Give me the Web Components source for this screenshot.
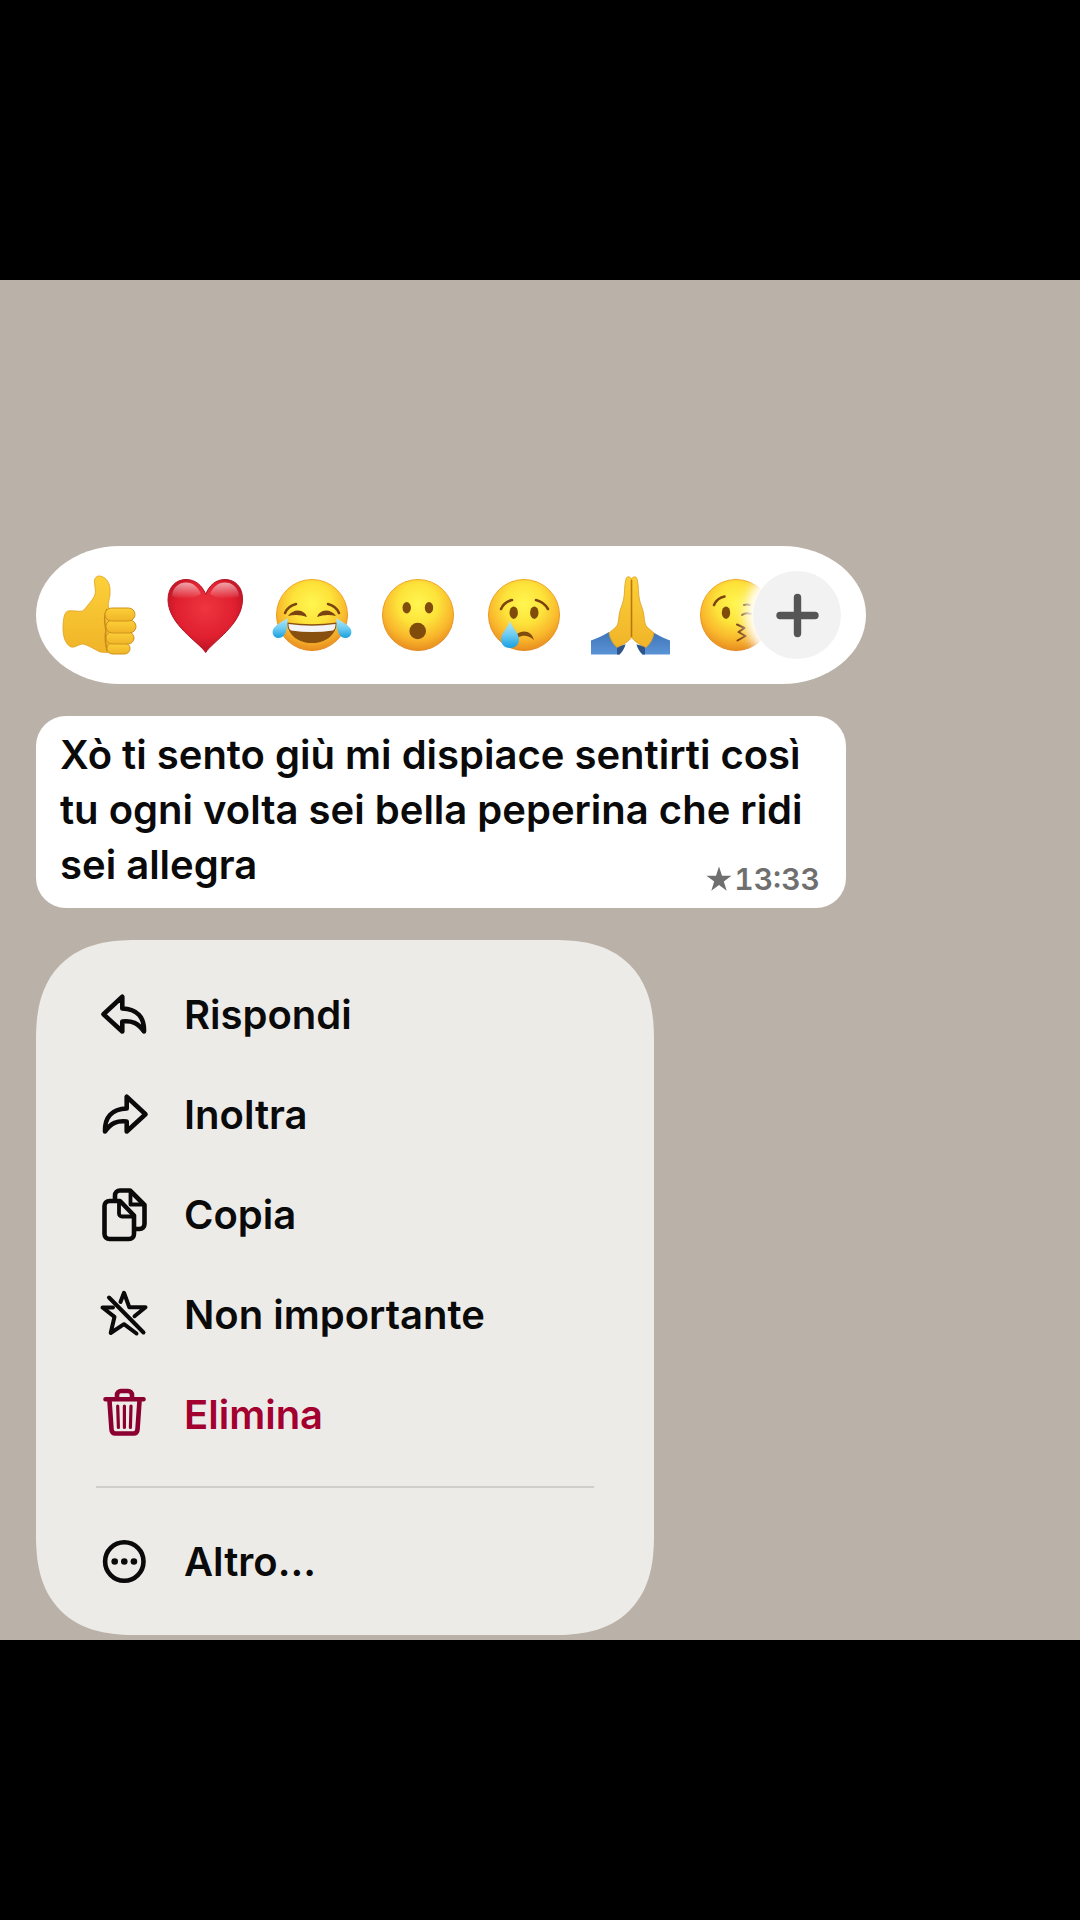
<!DOCTYPE html>
<html lang="it">
<head>
<meta charset="utf-8">
<meta name="viewport" content="width=device-width, initial-scale=1">
<title>Messaggio</title>
<style>
  body {
    margin: 0;
    background: #000;
    font-family: Inter, "Noto Sans", sans-serif;
    color: #0a0a0a;
  }
</style>
</head>
<body>

<template id="template-chat-overlay">
  <style>
    :host {
      display: flex;
      flex-direction: column;
      justify-content: center;
      min-height: 100vh;
    }
    main {
      display: flex;
      flex-direction: column;
      align-items: flex-start;
      gap: 32px;
      padding: 266px 36px 5px;
      background: #bab1a8;
    }
  </style>
  <main><slot></slot></main>
</template>

<template id="template-reaction-bar">
  <style>
    :host {
      display: flex;
      align-items: center;
      box-sizing: border-box;
      height: 138px;
      padding: 0 25px 0 24px;
      background: #fff;
      border-radius: 84px / 69px;
    }
    .strip {
      display: flex;
      gap: 26px;
    }
    .add {
      position: relative;
      width: 88px;
      height: 88px;
      margin: 0 0 0 -23px;
      padding: 0;
      border: 0;
      border-radius: 50%;
      background: #f2f2f2;
      box-shadow: 0 0 12px 8px #fff;
      color: #555;
    }
    .add svg {
      display: block;
      width: 88px;
      height: 88px;
    }
  </style>
  <div class="strip"><slot></slot></div>
  <button class="add" type="button" aria-label="Altre reazioni">
    <svg viewBox="0 0 88 88" fill="none" stroke="currentColor" stroke-width="7.400" stroke-linecap="round">
      <path d="M44.500 26.500V62.500M27 44.500H62"/>
    </svg>
  </button>
</template>

<template id="template-reaction-button">
  <style>
    :host {
      display: block;
    }
    button {
      display: block;
      padding: 0;
      border: 0;
      background: none;
    }
    svg {
      display: block;
      width: 80px;
      height: 80px;
      overflow: visible;
    }
  </style>
  <button type="button"></button>
</template>

<template id="template-message-bubble">
  <style>
    :host {
      display: flex;
      flex-direction: column;
      box-sizing: border-box;
      width: 75vw;
      padding: 11px 26px 11px 24px;
      background: #fff;
      border-radius: 30px;
    }
    p {
      margin: 0;
      font-size: 40px;
      font-weight: 600;
      line-height: 55px;
    }
    /* the time shares the last text line */
    .meta {
      display: flex;
      align-items: center;
      align-self: flex-end;
      gap: 2px;
      margin-top: -31px;
      font-size: 30px;
      font-weight: 600;
      font-variant-numeric: tabular-nums;
      line-height: 36px;
      color: #6f6f6f;
    }
    svg {
      width: 26px;
      height: 26px;
    }
  </style>
  <p><slot></slot></p>
  <div class="meta">
    <svg viewBox="0 0 26 26" fill="currentColor" aria-hidden="true">
      <path d="M13 .5L16 9.700H25.500L17.800 15.400L20.700 24.700L13 19L5.300 24.700L8.200 15.400L.5 9.700H10Z"/>
    </svg>
    <time></time>
  </div>
</template>

<template id="template-context-menu">
  <style>
    :host {
      display: flex;
      flex-direction: column;
      box-sizing: border-box;
      width: calc(57vw + 2px);
      padding: 25px 60px 23px;
      background: #ecebe7;
      border-radius: 84px;
    }
    @supports (corner-shape: superellipse(1.3)) {
      :host {
        border-radius: 100px;
        corner-shape: superellipse(1.3);
      }
    }
    ::slotted(hr) {
      box-sizing: border-box;
      width: 100%;
      height: 2px;
      margin: 21px 0 24px;
      border: 0;
      background: #cfcecb;
    }
  </style>
  <slot></slot>
</template>

<template id="template-menu-item">
  <style>
    :host {
      display: block;
    }
    button {
      display: flex;
      align-items: center;
      gap: 32px;
      width: 100%;
      height: 100px;
      padding: 0;
      border: 0;
      background: none;
      font: inherit;
      font-size: 40px;
      font-weight: 600;
      line-height: 54px;
      color: inherit;
      text-align: left;
    }
    :host([danger]) button {
      color: #a3002f;
    }
    :host([danger]) svg {
      color: #8b0030;
    }
    svg {
      flex: none;
      width: 56px;
      height: 56px;
    }
  </style>
  <button type="button">
    <svg viewBox="-4 -4 56 56" fill="none" stroke="currentColor" stroke-width="4.600" stroke-linecap="round" stroke-linejoin="round" aria-hidden="true"></svg>
    <span><slot></slot></span>
  </button>
</template>

<chat-overlay>
  <reaction-bar>
    <reaction-button name="thumb" label="Pollice in su"></reaction-button>
    <reaction-button name="heart" label="Cuore"></reaction-button>
    <reaction-button name="joy" label="Lacrime di gioia"></reaction-button>
    <reaction-button name="wow" label="Sorpresa"></reaction-button>
    <reaction-button name="cry" label="Pianto"></reaction-button>
    <reaction-button name="pray" label="Mani giunte"></reaction-button>
    <reaction-button name="kiss" label="Bacio"></reaction-button>
  </reaction-bar>
  <message-bubble time="13:33">Xò ti sento giù mi dispiace sentirti così tu ogni volta sei bella peperina che ridi sei allegra</message-bubble>
  <context-menu>
    <menu-item icon="reply">Rispondi</menu-item>
    <menu-item icon="forward">Inoltra</menu-item>
    <menu-item icon="copy">Copia</menu-item>
    <menu-item icon="unstar">Non importante</menu-item>
    <menu-item icon="trash" danger>Elimina</menu-item>
    <hr>
    <menu-item icon="more">Altro...</menu-item>
  </context-menu>
</chat-overlay>

<script>
  (function() {

    // gradients live in each shadow root, so that url(#id) resolves there
    const defs = `
      <defs>
        <radialGradient id="face" cx=".5" cy=".34" r=".7">
          <stop offset="0" stop-color="#fff650"/>
          <stop offset=".4" stop-color="#fde33a"/>
          <stop offset=".72" stop-color="#f9b62c"/>
          <stop offset="1" stop-color="#e3831c"/>
        </radialGradient>
        <linearGradient id="rim" x2="0" y2="1">
          <stop offset="0" stop-color="#f0a81c"/>
          <stop offset="1" stop-color="#e38a22"/>
        </linearGradient>
        <linearGradient id="tear" x2="0" y2="1">
          <stop offset="0" stop-color="#b5e9f8"/>
          <stop offset=".5" stop-color="#6fcdf0"/>
          <stop offset="1" stop-color="#189fe0"/>
        </linearGradient>
        <linearGradient id="skin" x2="0" y2="1">
          <stop offset="0" stop-color="#fcd038"/>
          <stop offset="1" stop-color="#f0b429"/>
        </linearGradient>
        <radialGradient id="red" cx=".5" cy=".4" r=".65">
          <stop offset="0" stop-color="#ee3540"/>
          <stop offset=".6" stop-color="#e0202f"/>
          <stop offset="1" stop-color="#b00f20"/>
        </radialGradient>
        <linearGradient id="shine" x2="0" y2="1">
          <stop offset="0" stop-color="#fff" stop-opacity=".6"/>
          <stop offset="1" stop-color="#fff" stop-opacity="0"/>
        </linearGradient>
        <linearGradient id="sleeve" x2="0" y2="1">
          <stop offset="0" stop-color="#3f74b8"/>
          <stop offset="1" stop-color="#5a94d6"/>
        </linearGradient>
      </defs>`;

    const face = '<circle cx="40" cy="40" r="35.500" fill="url(#face)" stroke="url(#rim)"/>';

    const reactions = {
      thumb: `
        <path fill="url(#skin)" stroke="#dfa01f" stroke-width=".8" d="M8 36C13 35 18 37 23 36C27 31 31 27 34 22C37 16 34 11 34.500 5C35.500 1 39 0 43 2C49 5 50.500 12 50 18C50 24 47 29 49 34L52 75C49 79 44 77 40 77C34 74 28 70 23 69C19 69 15 73 11 72C5 69 3 61 3 53C3 46 4 37 8 36Z"/>
        <path d="M47 34C43 42 45 49 46 56C44 63 46 69 47 76" fill="none" stroke="#c98a1a" stroke-width="1.500"/>
        <g fill="url(#skin)" stroke="#cf921c" stroke-width="1">
          <rect x="47" y="68" width="23" height="11" rx="5.500"/>
          <rect x="46" y="57" width="28" height="12" rx="6"/>
          <rect x="46" y="45" width="30" height="13" rx="6.500"/>
          <rect x="45" y="33" width="30" height="13" rx="6.500"/>
        </g>`,
      heart: `
        <path fill="url(#red)" stroke="#b31225" d="M39.700 77.500C33 67 2.500 50 2 25C2 12 10 4.500 20 4.500C29 4.500 36 10 39.700 19.300C43.500 10 50 4.500 59 4.500C69 4.500 77 12 76.500 25C76 50 46 67 39.700 77.500Z"/>
        <path fill="url(#shine)" d="M6 21C7 12 13 7.500 20 7.500C27 7.500 32 12 35 19C26 25 15 25 6 21ZM73 21C72 12 66 7.500 59 7.500C52 7.500 47 12 44 19C53 25 64 25 73 21Z"/>`,
      joy: face + `
        <g fill="none" stroke="#7b4311" stroke-width="2.500" stroke-linecap="round">
          <path d="M13 38Q16 31 24 29M67 38Q64 31 56 29"/>
        </g>
        <path fill="#7b4311" d="M16 41Q20 35.500 26 35.500Q33 36 35 42Q26 38.500 16 41ZM64 41Q60 35.500 54 35.500Q47 36 45 42Q54 38.500 64 41Z"/>
        <path fill="#87500f" d="M15 47.500Q40 51 65 47.500C64 60 54 68 40 68C26 68 16 60 15 47.500Z"/>
        <path fill="#f4f4f6" d="M16.500 49Q40 52.500 63.500 49Q63.500 54 61 55.500Q40 58.500 19 55.500Q16.500 54 16.500 49Z"/>
        <path fill="url(#tear)" d="M15.500 43C16 52 14 63 6.500 63C1 63-1 57 2 53C5 49 10 47 15.500 43ZM64.500 43C64 52 66 63 73.500 63C79 63 81 57 78 53C75 49 70 47 64.500 43Z"/>`,
      wow: face + `
        <g fill="#7f4c0c">
          <ellipse cx="28.700" cy="32.700" rx="4.200" ry="5.700"/>
          <ellipse cx="51" cy="32.700" rx="4.200" ry="5.700"/>
          <ellipse cx="39.700" cy="56" rx="8.300" ry="8.300"/>
        </g>`,
      cry: face + `
        <g fill="#7f4c0c">
          <ellipse cx="29.700" cy="37.700" rx="4.200" ry="6.200"/>
          <ellipse cx="50.300" cy="37.700" rx="4.200" ry="6.200"/>
          <path d="M32 59.500C40 53.500 48 57 50 65C44 60 39 60 34 62.500Z"/>
        </g>
        <path d="M17 34Q20 27 28 25M64 34Q60 27 52 25" fill="none" stroke="#7b4311" stroke-width="2.600" stroke-linecap="round"/>
        <path fill="url(#tear)" d="M26 45.500C28 53 35 58 35 64.500C35 69.500 31 73 26 73C21 73 17 69.500 17 64.500C17 58 24 53 26 45.500Z"/>`,
      pray: `
        <path fill="url(#sleeve)" d="M1 65.500C8 63 14 60 19 57L28 71L35.500 69.500C34 74 32 77 29.500 79.500H1ZM80 65.500C73 63 68 60 62.500 57L54 71L46.500 69.500C48 74 50 77 52.500 79.500H80Z"/>
        <path fill="#2f5488" d="M27 72L35.500 69.500C34 74 32 77 29.500 79.500H27ZM55 72L46.500 69.500C48 74 50 77 52.500 79.500H55Z"/>
        <g fill="url(#skin)" stroke="#dda01f" stroke-width=".8">
          <path d="M41.500 4C40 1 36.500 1 36 4C34 11 35 18 33.500 25C32 31 29.500 35 29 41C28.500 46 28 50 26 52L19 58C20 64 23 69 27 72.500C32 70 39 67 41.500 62Z"/>
          <path d="M41.500 4C43 1 46.500 1 47 4C49 11 48 18 49.500 25C51 31 53.500 35 54 41C54.500 46 55 50 57 52L64 58C63 64 60 69 56 72.500C51 70 44 67 41.500 62Z"/>
        </g>
        <path d="M41.500 5V62" stroke="#b9760f" stroke-width="1.600"/>`,
      kiss: face + `
        <ellipse cx="30" cy="37.700" rx="4.200" ry="6.200" fill="#7f4c0c"/>
        <g fill="none" stroke="#7b4311" stroke-width="2.600" stroke-linecap="round">
          <path d="M18 30Q21 23 28.500 21.500"/>
          <path stroke-width="2" d="M41 49.500L48.500 53L42.500 57L49.500 61L41.500 65.500" stroke-linejoin="round"/>
          <path stroke-width="2" d="M46 40Q50 37 55 39M48 30Q51 29 54 30"/>
        </g>`
    };

    const icons = {
      reply: '<path d="M3.500 23.300L22.300 5.800V17.500C37 18 44.500 26 44 40.500C38 32 32 29.500 22.300 30.500V40.500Z"/>',
      forward: '<path d="M45.500 23.300L26.700 5.800V17.500C12 18 4.500 26 5 40.500C11 32 17 29.500 26.700 30.500V40.500Z"/>',
      copy: `
        <path d="M9.500 10H20L34 24.500V43A5 5 0 0 1 29 48H9.500A5 5 0 0 1 4.500 43V15A5 5 0 0 1 9.500 10Z"/>
        <path stroke-width="3.800" d="M19 11V22.500A3 3 0 0 0 22 25.500H33"/>
        <path d="M15 8V4.500A5 5 0 0 1 20 -.5H30L44.500 14V33A5 5 0 0 1 39.500 38H36"/>
        <path stroke-width="3.800" d="M30.500 1V13.500H43"/>`,
      unstar: `
        <g stroke-width="4">
          <path d="M20.500 11L24 1.800L29.300 16.200H45.500L34.500 25.200"/>
          <path d="M13 16.500H2.500L14.500 25.800L10.700 42L24 33.200L36.500 42.500"/>
          <path d="M9 6.500L43.500 41.500"/>
        </g>`,
      trash: `
        <path d="M5.500 8.300H43.500M17 7V4A4 4 0 0 1 21 0H28A4 4 0 0 1 32 4V7"/>
        <path d="M9.500 10L11.500 38.500Q11.800 42.500 15.500 42.500H33.500Q37.200 42.500 37.500 38.500L39.500 10"/>
        <path stroke-width="3.200" d="M17.700 15L18.400 36.500M24.400 15V36.500M31 15L30.400 36.500"/>`,
      more: `
        <circle cx="24.300" cy="23.500" r="19.200"/>
        <g fill="currentColor" stroke="none">
          <circle cx="14.700" cy="23.500" r="3.300"/>
          <circle cx="24.300" cy="23.500" r="3.300"/>
          <circle cx="33.900" cy="23.500" r="3.300"/>
        </g>`
    };

    class TemplateElement extends HTMLElement {
      connectedCallback() {
        if (this.shadowRoot) {
          return;
        }
        const template = document.getElementById('template-' + this.localName);
        this.attachShadow({mode: 'open'}).appendChild(template.content.cloneNode(true));
        this.render(this.shadowRoot);
      }

      render() {}
    }

    class ChatOverlay extends TemplateElement {}

    class ReactionBar extends TemplateElement {}

    class ReactionButton extends TemplateElement {
      render(root) {
        const button = root.querySelector('button');
        button.setAttribute('aria-label', this.getAttribute('label'));
        button.innerHTML = `<svg viewBox="0 0 80 80">${defs}${reactions[this.getAttribute('name')]}</svg>`;
      }
    }

    class MessageBubble extends TemplateElement {
      render(root) {
        root.querySelector('time').textContent = this.getAttribute('time');
      }
    }

    class ContextMenu extends TemplateElement {}

    class MenuItem extends TemplateElement {
      render(root) {
        root.querySelector('svg').innerHTML = icons[this.getAttribute('icon')];
      }
    }

    customElements.define('chat-overlay', ChatOverlay);
    customElements.define('reaction-bar', ReactionBar);
    customElements.define('reaction-button', ReactionButton);
    customElements.define('message-bubble', MessageBubble);
    customElements.define('context-menu', ContextMenu);
    customElements.define('menu-item', MenuItem);

  })();
</script>
</body>
</html>
